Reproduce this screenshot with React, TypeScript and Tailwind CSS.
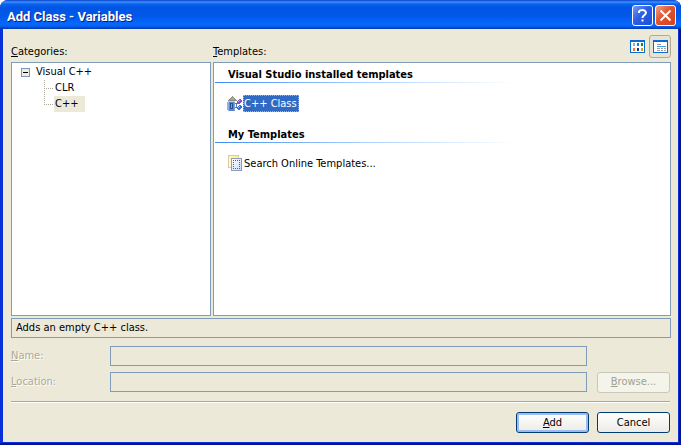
import React from "react";

const FONT = "font-['Tahoma','DejaVu_Sans_Condensed','DejaVu_Sans',sans-serif]";

const ClassIcon = () => (
  <svg width="16" height="17" viewBox="0 0 16 17" shapeRendering="crispEdges" aria-hidden="true">
    <path d="M5 1h1v1h1v1h1v1h1v1h1v1H1V5h1V4h1V3h1V2h1z" fill="#8e8e7c" />
    <path d="M5 2h1v1h1v1h1v1H4V3h1z" fill="#a6a694" />
    <path d="M0 7h1V6h2v10H1v-1H0z" fill="#8db4ea" />
    <path d="M2 6h6v10H2z" fill="#5c88c8" />
    <path d="M7 6h1v10H7z" fill="#7b9fd4" />
    <path d="M1 6h7v1H1z" fill="#b6cff0" />
    <path d="M3 8h3v6H3z" fill="#2b5094" />
    <path d="M4 9h1v4H4z" fill="#6f9ade" />
    <path d="M8 8h3v1H8zM8 12h3v1H8zM9 8h1v5H9z" fill="#5578c0" />
    <path d="M12 4h2v1h1v2h-1v1h-1v1h-2V8h-1V6h1V5h1z" fill="#8c50c8" />
    <path d="M12 5h1v1h-1v1h-1V6h1z" fill="#c8a0ee" />
    <path d="M12 10h2v1h1v2h-1v1h-1v1h-2v-1h-1v-2h1v-1h1z" fill="#2f6fd8" />
    <path d="M12 11h1v1h-1v1h-1v-1h1z" fill="#8cc0ff" />
  </svg>
);

const SearchIcon = () => (
  <svg width="16" height="17" viewBox="0 0 16 17" shapeRendering="crispEdges" aria-hidden="true">
    <defs>
      <linearGradient id="backPage" x1="1" y1="0" x2="0" y2="1">
        <stop offset="0" stopColor="#fff08c" />
        <stop offset="1" stopColor="#fffdf0" />
      </linearGradient>
      <linearGradient id="frontPage" x1="0" y1="0" x2="1" y2="1">
        <stop offset="0" stopColor="#ffffff" />
        <stop offset="1" stopColor="#c8daf6" />
      </linearGradient>
    </defs>
    <path d="M1.500 .5h10v12h-10z" fill="url(#backPage)" stroke="#d8ccA0" />
    <path d="M4.500 3.500h10v12h-10z" fill="url(#frontPage)" stroke="#8c9cbc" />
    <path d="M6 5.500h7M6 13.500h7M6.500 5v9M12.500 5v9" fill="none" stroke="#44639c" strokeDasharray="1 1" />
  </svg>
);

const SmallIconsIcon = () => (
  <svg width="15" height="13" viewBox="0 0 15 13" shapeRendering="crispEdges" aria-hidden="true">
    <path d="M0 0h15v13H0z" fill="#0a6ad0" />
    <path d="M1 2h13v10H1z" fill="#fff" />
    <path d="M3 3h2v3H3z" fill="#a4a0c8" />
    <path d="M7 3h2v3H7z" fill="#1478e8" />
    <path d="M11 3h2v3h-2z" fill="#109010" />
    <path d="M3 8h2v3H3z" fill="#ff7038" />
    <path d="M7 8h2v3H7z" fill="#0a3c98" />
    <path d="M11 8h2v3h-2z" fill="#d09c10" />
  </svg>
);

const ListIcon = () => (
  <svg width="15" height="13" viewBox="0 0 15 13" shapeRendering="crispEdges" aria-hidden="true">
    <path d="M0 0h15v13H0z" fill="#0a6ad0" />
    <path d="M1 2h13v10H1z" fill="#fff" />
    <path d="M4 4h4v1H4z" fill="#9898a0" />
    <path d="M4 6h9v1H4z" fill="#3c9cf0" />
    <path d="M4 8h3v1H4zM8 8h2v1H8zM11 8h2v1h-2zM4 10h3v1H4zM8 10h2v1H8zM11 10h2v1h-2z" fill="#a0a0a0" />
  </svg>
);

interface TemplateGroupProps {
  title: string;
  children: React.ReactNode;
}

const TemplateGroup: React.FC<TemplateGroupProps> = ({ title, children }) => (
  <section className="h-[60px] px-px">
    <h2 className="pl-[13px] pt-1 h-[19px] text-[11px] leading-4 font-bold">{title}</h2>
    <div className="h-px w-[300px] max-w-full bg-linear-to-r from-[#3c8cf0] via-[#a8d0ff] to-white" />
    <div className="flex pt-3 pl-3">{children}</div>
  </section>
);

interface FieldProps {
  id: string;
  label: string;
  children?: React.ReactNode;
}

const Field: React.FC<FieldProps> = ({ id, label, children }) => (
  <div className="flex items-center h-5">
    <label
      htmlFor={id}
      className="w-[99px] shrink-0 text-[#aca899] [text-shadow:1px_1px_0_#fff]"
    >
      <u>{label[0]}</u>
      {label.slice(1)}
    </label>
    <input
      id={id}
      type="text"
      disabled
      className="min-w-0 flex-1 h-5 px-1 border border-[#7f9db9] bg-[#ece9d8]"
    />
    <div className="w-[84px] shrink-0 pl-2.5 pr-px">{children}</div>
  </div>
);

const App = () => {
  return (
    <div className="min-h-screen bg-white">
      <main
        className={`${FONT} flex flex-col min-h-screen rounded-t-lg overflow-hidden bg-[#0831d9] [box-shadow:inset_-2px_-2px_0_#00138c] text-[11px] leading-4 text-black`}
      >
        <header className="flex items-center h-[29px] pl-[7px] pr-[5px] bg-[linear-gradient(#0a3fc8_0,#3c90ff_2px,#0862ee_4px,#0054e3_8px,#0058ea_16px,#0668ff_24px,#0561f5_26px,#0038b0_29px)]">
          <h1 className="flex-1 pt-1 font-['Trebuchet_MS','Roboto',sans-serif] text-[13px] leading-5 font-bold text-white [text-shadow:1px_1px_0_#0a1883]">
            Add Class - Variables
          </h1>
          <div className="flex gap-0.5 pt-0.5">
            <button
              type="button"
              aria-label="Help"
              className="flex items-center justify-center size-[21px] rounded-[3px] border border-white bg-[linear-gradient(135deg,#7b9cf4,#2c5de4_45%,#1c4fd8)]"
            >
              <svg width="13" height="15" viewBox="0 0 13 15" fill="none" stroke="#fff" strokeWidth="2" aria-hidden="true">
                <path d="M3 5V3.500Q4 2 6.500 2T10 4.500Q10 6 8.500 7T6.500 9.500V10M6.500 11.500v2" />
              </svg>
            </button>
            <button
              type="button"
              aria-label="Close"
              className="flex items-center justify-center size-[21px] rounded-[3px] border border-white bg-[linear-gradient(135deg,#f0a088,#e2522c_45%,#d2421c)]"
            >
              <svg width="13" height="13" viewBox="0 0 13 13" stroke="#fff" strokeWidth="2" aria-hidden="true">
                <path d="M1.500 1.500l10 10M11.500 1.500l-10 10" />
              </svg>
            </button>
          </div>
        </header>

        <div className="flex flex-1 flex-col mx-[3px] mb-[3px] pl-2 pr-[7px] pb-[9px] bg-[#ece9d8]">
          <div className="grid flex-1 grid-cols-[200px_minmax(0,1fr)] grid-rows-[33px_minmax(180px,1fr)] gap-x-0.5">
            <div className="pt-[15px]">
              <u>C</u>ategories:
            </div>
            <div className="flex justify-between">
              <div className="pt-[15px]">
                <u>T</u>emplates:
              </div>
              <div className="flex items-center gap-1 pt-1 pb-0.5">
                <button type="button" aria-label="Small icons" className="flex">
                  <SmallIconsIcon />
                </button>
                <button
                  type="button"
                  aria-label="List"
                  aria-pressed="true"
                  className="flex items-center justify-center w-[22px] h-[23px] rounded-[3px] border border-[#aeab9c] bg-[#e6e3d4]"
                >
                  <ListIcon />
                </button>
              </div>
            </div>

            <ul role="tree" aria-label="Categories" className="border border-[#7f9db9] bg-white pt-px pl-[9px]">
              <li role="treeitem" aria-expanded="true">
                <div className="flex items-center gap-1.5">
                  <svg width="9" height="9" viewBox="0 0 9 9" shapeRendering="crispEdges" aria-hidden="true">
                    <path d="M.5.5h8v8h-8z" fill="#eeece4" stroke="#7898b5" />
                    <path d="M2 4h5v1H2z" fill="#000" />
                  </svg>
                  Visual C++
                </div>
                <ul role="group" className="pl-[23px]">
                  <li role="treeitem" className="flex">
                    <svg width="10" height="16" viewBox="0 0 10 16" stroke="#aca899" strokeDasharray="1 1" shapeRendering="crispEdges" aria-hidden="true">
                      <path d="M.5 0v16M0 8.500h9" />
                    </svg>
                    <span className="px-px">CLR</span>
                  </li>
                  <li role="treeitem" aria-selected="true" className="flex">
                    <svg width="10" height="16" viewBox="0 0 10 16" stroke="#aca899" strokeDasharray="1 1" shapeRendering="crispEdges" aria-hidden="true">
                      <path d="M.5 0v9M0 8.500h9" />
                    </svg>
                    <span className="pl-px pr-1.5 bg-[#ece9d8]">C++</span>
                  </li>
                </ul>
              </li>
            </ul>

            <div className="border border-[#7f9db9] bg-white">
              <TemplateGroup title="Visual Studio installed templates">
                <ClassIcon />
                <button
                  type="button"
                  className="h-[17px] pr-px leading-[13px] border border-dotted border-[#e0a860] bg-[#316ac5] text-white"
                >
                  C++ Class
                </button>
              </TemplateGroup>
              <TemplateGroup title="My Templates">
                <SearchIcon />
                <button type="button" className="h-[17px] px-px leading-[15px]">
                  Search Online Templates...
                </button>
              </TemplateGroup>
            </div>
          </div>

          <p className="mt-0.5 h-5 px-1 leading-[18px] border border-[#7f9db9]">
            Adds an empty C++ class.
          </p>

          <div className="flex flex-col gap-1.5 mt-2">
            <Field id="name" label="Name:" />
            <Field id="location" label="Location:">
              <button
                type="button"
                disabled
                className="w-full h-[21px] rounded-[3px] border border-[#c9c7ba] bg-[#f5f4ea] text-[#a1a192]"
              >
                <u>B</u>rowse...
              </button>
            </Field>
          </div>

          <hr className="mt-[9px] mr-px h-0.5 border-t border-b border-t-[#aca899] border-b-white" />

          <div className="flex justify-end gap-2 mt-[9px] pr-px">
            <button
              type="button"
              className="w-[73px] h-[21px] rounded-[3px] border border-[#003c74] bg-linear-to-b from-white to-[#ecebe5] [box-shadow:inset_0_0_0_2px_#9ebcf0]"
            >
              <u>A</u>dd
            </button>
            <button
              type="button"
              className="w-[73px] h-[21px] rounded-[3px] border border-[#003c74] bg-linear-to-b from-white to-[#ecebe5]"
            >
              Cancel
            </button>
          </div>
        </div>
      </main>
    </div>
  );
};

export default App;
